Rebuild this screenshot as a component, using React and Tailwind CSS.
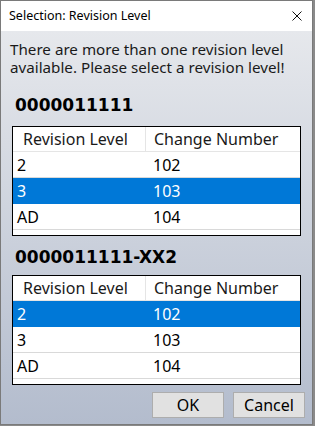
import React from "react";

const tables = [
  { title: "0000011111", rows: [["2", "102"], ["3", "103"], ["AD", "104"]], selected: 1 },
  { title: "0000011111-XX2", rows: [["2", "102"], ["3", "103"], ["AD", "104"]], selected: 0 },
];

const RevisionTable = ({ rows, selected }) => (
  <div className="mx-[11px] border border-black bg-white h-[110px] overflow-hidden">
    <div className="flex h-[25px] border-b border-[#e5e5e5] text-[16px] text-[#1a1a1a]">
      <div className="w-[133px] pl-[10px] border-r border-[#e5e5e5] flex items-center">Revision Level</div>
      <div className="pl-[8px] flex items-center">Change Number</div>
    </div>
    {rows.map((r, i) => (
      <div
        key={i}
        className={
          i === selected
            ? "flex h-[26px] border-b border-[#0078d7] bg-[#0078d7] text-white text-[16px]"
            : "flex h-[26px] border-b border-[#d9d9d9] text-black text-[16px]"
        }
      >
        <div className="w-[134px] pl-[4px] flex items-center">{r[0]}</div>
        <div className="pl-[6px] flex items-center">{r[1]}</div>
      </div>
    ))}
  </div>
);

export default function App() {
  return (
    <div className="w-[315px] h-[426px] bg-[#8a8a8a] overflow-hidden" style={{ fontFamily: '"Noto Sans", "Open Sans", sans-serif' }}>
      <div className="w-[313px] h-[425px] border border-[#7a7a7a] flex flex-col">
        <div className="h-[30px] bg-white flex items-center justify-between pl-[8px] pr-[10px]">
          <span className="text-[12.5px] text-black">Selection: Revision Level</span>
          <svg width="10" height="10" viewBox="0 0 10 10">
            <path d="M0.5 0.5L9.5 9.5M9.5 0.5L0.5 9.5" stroke="#111" strokeWidth="1" />
          </svg>
        </div>
        <div className="flex-1 bg-gradient-to-b from-[#e6e8ec] to-[#b3bccd] flex flex-col">
          <p className="mt-[9px] ml-[9px] text-[15.2px] leading-[18px] text-[#1a1a1a]">
            There are more than one revision level available. Please select a revision level!
          </p>
          <div
            className="mt-[20px] ml-[14px] text-[17px] font-bold leading-[18px] text-black"
            style={{ fontFamily: '"DejaVu Sans", sans-serif' }}
          >
            {tables[0].title}
          </div>
          <div className="mt-[12px]">
            <RevisionTable rows={tables[0].rows} selected={tables[0].selected} />
          </div>
          <div
            className="mt-[12px] ml-[14px] text-[17px] font-bold leading-[18px] text-black"
            style={{ fontFamily: '"DejaVu Sans", sans-serif' }}
          >
            {tables[1].title}
          </div>
          <div className="mt-[9px]">
            <RevisionTable rows={tables[1].rows} selected={tables[1].selected} />
          </div>
          <div className="flex justify-end gap-[9px] mt-[7px] pr-[7px]">
            <button className="w-[72px] h-[26px] bg-[#e1e1e1] border border-[#adadad] text-[16px] text-black">OK</button>
            <button className="w-[72px] h-[26px] bg-[#e1e1e1] border border-[#adadad] text-[16px] text-black">Cancel</button>
          </div>
        </div>
      </div>
    </div>
  );
}
